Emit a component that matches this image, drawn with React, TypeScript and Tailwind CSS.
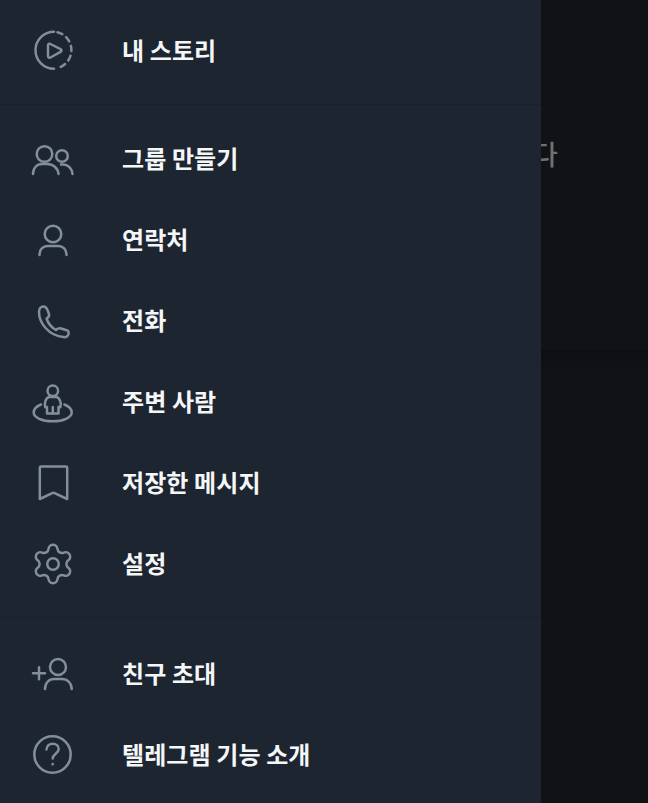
import { Settings } from "lucide-react";
import type { ReactNode } from "react";

const stroke = "#818e9b";

// svg coordinates below are the page coordinates of the screenshot, the viewBox just follows the row
const Glyph = ({ y, children }: { y: number; children: ReactNode }) => (
  <svg
    width="45"
    height="45"
    viewBox={`30 ${y} 45 45`}
    fill="none"
    stroke={stroke}
    strokeWidth="2.5"
    strokeLinecap="round"
    strokeLinejoin="round"
  >
    {children}
  </svg>
);

const StoryIcon = () => (
  <Glyph y={28}>
    <path d="M54 31.800a18.500 18.500 0 0 0 0 37" />
    <path d="M57.500 32.200a18.500 18.500 0 0 1 2.500 35" strokeDasharray="5.200 4.800" />
    <path d="M48 45.500c0-1.500 1.300-2.200 2.500-1.500l10 5.200c1.300.7 1.300 2 0 2.700l-10 5.600c-1.200.7-2.500 0-2.500-1.500z" />
  </Glyph>
);

const GroupIcon = () => (
  <Glyph y={136}>
    <circle cx="44.500" cy="154" r="7.800" />
    <circle cx="62" cy="156" r="5.800" />
    <path d="M33 174c0-6 4-10 9-10h5c6 0 11 4 11.500 10" />
    <path d="M61 164.500h2c5 0 9 4 9.500 9.500" />
  </Glyph>
);

const ContactIcon = () => (
  <Glyph y={217}>
    <circle cx="53" cy="234" r="8.300" />
    <path d="M39.500 255v-1c0-4.500 3.500-8 8-8h11c4.500 0 8 3.500 8 8v1" />
  </Glyph>
);

const PhoneIcon = () => (
  <Glyph y={298}>
    <path d="M39 312C39 308.500 41 306.500 43.500 306.500C45.500 306.500 46.500 307.500 47.500 310L49 314C49.500 316 48.500 317.500 46.500 318.500C48 323 51.500 327.500 56 330C57.500 328.500 59 328 61 328.500L66 330C68 330.500 69 332 68.500 334C68 336.500 66 337.500 63.500 337C49 336 39 323 39 312Z" />
  </Glyph>
);

const NearbyIcon = () => (
  <Glyph y={379}>
    <circle cx="52.800" cy="390.800" r="5.300" />
    <path d="M41 404.500c-4.500 1.800-7.300 4.300-7.300 8c0 5 8.500 8.800 19 8.800s19-3.800 19-8.800c0-3.700-2.800-6.200-7.300-8" />
    <path d="M47 413.500v-6.500l-1.800.2c-1.200-3 .4-9.700 4-10.200h7.200c3.600.5 5.200 7.200 4 10.200l-1.900-.2v6.500z" />
    <path d="M52.800 407v6.500" />
  </Glyph>
);

const BookmarkIcon = () => (
  <Glyph y={460}>
    <path d="M41 466.500h25c.7 0 1.200.5 1.200 1.200v31.300l-13.200-6.200a1.500 1.500 0 0 0-1.200 0l-13 6.200v-31.300c0-.7.500-1.200 1.200-1.200z" />
  </Glyph>
);

const InviteIcon = () => (
  <Glyph y={651}>
    <circle cx="58" cy="667" r="8" />
    <path d="M45 689c0-6 4-10 9-10h8c5.500 0 9.500 4 9.700 10" />
    <path d="M33 673.300h12M39 667.300v12" />
  </Glyph>
);

const HelpIcon = () => (
  <Glyph y={732}>
    <circle cx="52.500" cy="754.500" r="18.200" />
    <path d="M46.500 749.500c.3-3.500 2.800-5.800 6.200-5.800c3.500 0 6 2.300 6 5.300c0 4.700-6 4.700-6 9.500" />
    <path d="M52.700 764v.2" />
  </Glyph>
);

type Item = { label: string; icon: ReactNode };

const top: Item[] = [{ label: "내 스토리", icon: <StoryIcon /> }];
const middle: Item[] = [
  { label: "그룹 만들기", icon: <GroupIcon /> },
  { label: "연락처", icon: <ContactIcon /> },
  { label: "전화", icon: <PhoneIcon /> },
  { label: "주변 사람", icon: <NearbyIcon /> },
  { label: "저장한 메시지", icon: <BookmarkIcon /> },
  { label: "설정", icon: <Settings size={46} color={stroke} strokeWidth={1.3} /> },
];
const bottom: Item[] = [
  { label: "친구 초대", icon: <InviteIcon /> },
  { label: "텔레그램 기능 소개", icon: <HelpIcon /> },
];

const Row = ({ label, icon }: Item) => (
  <div className="flex h-[81px] items-center">
    <div className="flex w-[105px] shrink-0 justify-center">{icon}</div>
    <span className="mb-[1px] ml-[17px] text-[24px] font-bold leading-none tracking-[0.1px] text-[#f4f6f8]">{label}</span>
  </div>
);

const App = () => {
  return (
    <div
      className="flex h-[803px] w-[648px] overflow-hidden bg-[#101216]"
      style={{ fontFamily: '"Noto Sans CJK KR", "Noto Sans", sans-serif' }}
    >
      <div className="flex w-[541px] shrink-0 flex-col bg-[#1d2530]">
        <div className="border-b border-[#19202a] pb-[13px] pt-[10px]">
          {top.map((item) => (
            <Row key={item.label} {...item} />
          ))}
        </div>
        <div className="border-b border-[#19202a] py-[13px]">
          {middle.map((item) => (
            <Row key={item.label} {...item} />
          ))}
        </div>
        <div className="py-[15px]">
          {bottom.map((item) => (
            <Row key={item.label} {...item} />
          ))}
        </div>
      </div>
      <div className="flex min-w-0 flex-1 flex-col overflow-hidden">
        <div className="flex h-[350px] items-start pt-[136px]">
          <span className="-ml-[8px] text-[27px] font-medium leading-[36px] text-[#6e7074]">다</span>
        </div>
        <div className="h-[22px] bg-gradient-to-b from-[#0d0e11] to-[#101216]" />
        <div className="flex-1 bg-[#101216]" />
      </div>
    </div>
  );
};

export default App;
